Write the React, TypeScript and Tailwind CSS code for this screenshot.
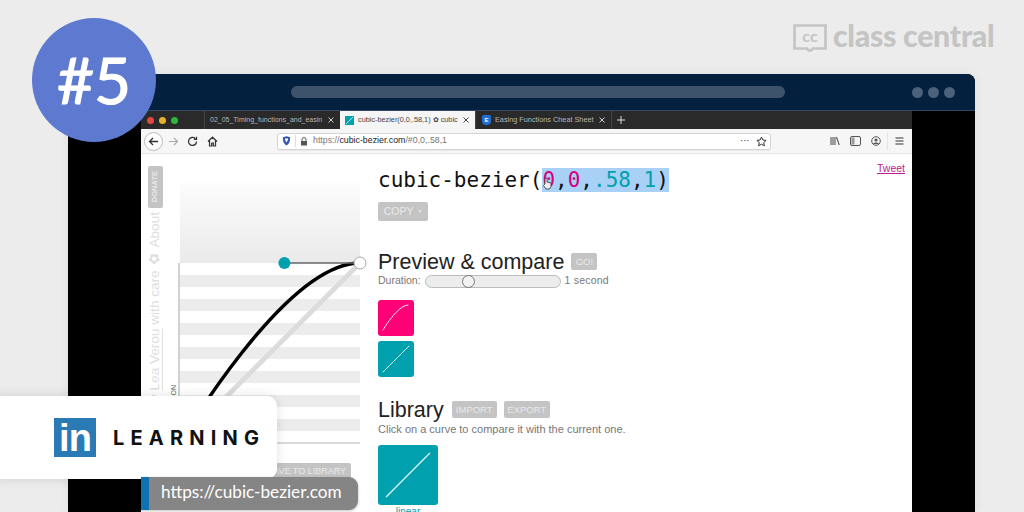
import React from "react";

const sans = "font-['Liberation_Sans',Arial,sans-serif]";

function Btn({ children, className = "" }: { children: React.ReactNode; className?: string }) {
  return (
    <span className={`inline-flex items-center justify-center rounded-[2px] bg-[#c4c4c4] text-[#e9e9e9] ${className}`}>
      {children}
    </span>
  );
}

function Thumb({ bg, size, curve, sw, className = "" }: { bg: string; size: number; curve: string; sw: number; className?: string }) {
  return (
    <div className={`rounded-[3px] ${className}`} style={{ background: bg, width: size, height: size }}>
      <svg viewBox="0 0 36 36" width={size} height={size}>
        <path d={curve} fill="none" stroke="#d9f2f4" strokeWidth={sw} strokeLinecap="round" />
      </svg>
    </div>
  );
}

function Tab({ active, title, icon, w, textClass = "text-[7.3px]" }: { active?: boolean; title: string; icon?: React.ReactNode; w: string; textClass?: string }) {
  return (
    <div className={`${w} flex h-full shrink-0 items-center gap-1 pl-[5px] pr-[5px] ${active ? "bg-[#f5f5f5] text-[#444]" : "border-l border-[#444] text-[#b5b5b5]"}`}>
      {icon}
      <span className={`flex-1 whitespace-nowrap ${textClass}`}>{title}</span>
      <svg width="8" height="8" viewBox="0 0 8 8" className="shrink-0"><path d="M1.5 1.5l5 5M6.5 1.5l-5 5" stroke={active ? "#444" : "#ccc"} strokeWidth="1" /></svg>
    </div>
  );
}

function Chart() {
  return (
    <svg width="200" height="320" viewBox="0 0 200 320" className="block overflow-visible">
      <defs>
        <linearGradient id="top" x1="0" x2="0" y1="0" y2="1">
          <stop offset="0" stopColor="#fcfcfc" />
          <stop offset="1" stopColor="#eaeaea" />
        </linearGradient>
      </defs>
      <rect x="20" y="39" width="180" height="80" fill="url(#top)" />
      {[0, 1, 2, 3, 4, 5, 6].map((i) => (
        <rect key={i} x="20" y={131 + i * 24} width="180" height="12" fill="#ececec" />
      ))}
      <path d="M19 119V299H200" fill="none" stroke="#b5b5b5" strokeWidth="1.2" />
      <path d="M200 119L20 299" stroke="#dcdcdc" strokeWidth="5" />
      <path d="M20 299C20 299 124.4 119 200 119" fill="none" stroke="#000" strokeWidth="3.5" />
      <path d="M124 119H200" stroke="#666" strokeWidth="1.5" />
      <circle cx="124.4" cy="119" r="6" fill="#00a0ae" />
      <circle cx="200" cy="119" r="6" fill="#fff" stroke="#a8a8a8" />
    </svg>
  );
}

export default function App() {
  return (
    <div className={`relative h-[512px] w-[1024px] overflow-hidden bg-[#ececec] ${sans}`}>
      {/* Window */}
      <div className="pl-[68px] pr-[49px] pt-[74px]">
        <div className="h-[438px] overflow-hidden rounded-tr-[8px] bg-black shadow-[0_0_12px_rgba(0,0,0,0.06)]">
          <div className="flex h-[37px] items-center border-b border-[#35495f] bg-[#03213f] pl-[223px] pr-[20px]">
            <div className="h-[12px] w-[494px] rounded-full bg-[#3d536c]" />
            <div className="ml-auto flex gap-[5px]">
              <span className="h-[11px] w-[11px] rounded-full bg-[#4b6079]" />
              <span className="h-[11px] w-[11px] rounded-full bg-[#4b6079]" />
              <span className="h-[11px] w-[11px] rounded-full bg-[#4b6079]" />
            </div>
          </div>

          {/* Browser */}
          <div className="ml-[73px] h-[401px] w-[771px] bg-white">
            <div className="flex h-[18px] items-center bg-[#2a2a2a]">
              <div className="flex w-[63px] shrink-0 items-center gap-[5px] pl-[6px]">
                <span className="h-[7px] w-[7px] rounded-full bg-[#e0493f]" />
                <span className="h-[7px] w-[7px] rounded-full bg-[#e9ae2c]" />
                <span className="h-[7px] w-[7px] rounded-full bg-[#2fb53c]" />
              </div>
              <Tab w="w-[136px]" textClass="text-[7px]" title="02_05_Timing_functions_and_easin" />
              <Tab
                active
                w="w-[135px]"
                title="cubic-bezier(0,0,.58,1) ✿ cubic"
                icon={<span className="flex h-[9px] w-[9px] shrink-0 items-center justify-center bg-[#00a0ae]"><svg width="9" height="9" viewBox="0 0 9 9"><path d="M1 8L8 1" stroke="#d9f2f4" strokeWidth="0.8" /></svg></span>}
              />
              <Tab
                w="w-[136px]"
                title="Easing Functions Cheat Sheet"
                icon={<span className="ml-[1px] flex h-[10px] w-[9px] shrink-0 items-center justify-center rounded-b-[4px] rounded-t-[2px] bg-[#1f6fd0] text-[6px] font-bold text-white">E</span>}
              />
              <span className="h-full w-px bg-[#444]" />
              <svg className="ml-[4px]" width="10" height="10" viewBox="0 0 10 10"><path d="M5 1v8M1 5h8" stroke="#ddd" strokeWidth="1" /></svg>
            </div>

            <div className="flex h-[25px] items-center border-b border-[#e4e4e4] bg-[#f6f6f6] pl-[3px] pr-[8px] text-[#444]">
              <span className="flex h-[19px] w-[19px] items-center justify-center rounded-full border border-[#bbb] bg-white">
                <svg width="11" height="11" viewBox="0 0 11 11"><path d="M10 5.5H1.5M5 2L1.5 5.5 5 9" fill="none" stroke="#333" strokeWidth="1.3" /></svg>
              </span>
              <svg className="ml-[5px]" width="11" height="11" viewBox="0 0 11 11"><path d="M1 5.5h8.5M6 2l3.5 3.5L6 9" fill="none" stroke="#aaa" strokeWidth="1.2" /></svg>
              <svg className="ml-[8px]" width="11" height="11" viewBox="0 0 11 11"><path d="M9.5 5.5a4 4 0 1 1-1.3-3M9.5 0.8v2.6H6.9" fill="none" stroke="#333" strokeWidth="1.3" /></svg>
              <svg className="ml-[9px]" width="11" height="11" viewBox="0 0 11 11"><path d="M1 5.5L5.5 1.2 10 5.5M2.5 4.5V10h2.2V7h1.6v3h2.2V4.5" fill="none" stroke="#333" strokeWidth="1.2" /></svg>
              <div className="ml-[59px] flex h-[17px] w-[494px] items-center rounded-[3px] border border-[#d4d4d4] bg-white pl-[4px] pr-[3px] shadow-[0_1px_1px_rgba(0,0,0,0.06)]">
                <svg width="9" height="10" viewBox="0 0 9 10"><path d="M0.8 1.2L4.5 0.3 8.2 1.2C8.2 5.5 7 8 4.5 9.6 2 8 0.8 5.5 0.8 1.2z" fill="#3557b0" /><path d="M3 2.5h3v1.2L4.5 6.5 3 3.7z" fill="#fff" /></svg>
                <span className="mx-[4px] h-[12px] w-px bg-[#ddd]" />
                <svg width="8" height="9" viewBox="0 0 8 9"><path d="M2 4V2.6a2 2 0 0 1 4 0V4" fill="none" stroke="#555" /><rect x="1" y="4" width="6" height="4.6" rx="0.6" fill="#555" /></svg>
                <span className="ml-[5px] whitespace-nowrap text-[8.8px] text-[#222]">
                  <span className="text-[#777]">https://</span>cubic-bezier.com<span className="text-[#777]">/#0,0,.58,1</span>
                </span>
                <span className="ml-auto text-[8px] font-bold leading-none tracking-[0.5px] text-[#555]">···</span>
                <svg className="ml-[6px]" width="11" height="11" viewBox="0 0 11 11"><path d="M5.5 1l1.4 3 3.2.4-2.4 2.2.7 3.2-2.9-1.6-2.9 1.6.7-3.2L.9 4.4l3.2-.4z" fill="none" stroke="#333" strokeWidth="1" /></svg>
              </div>
              <svg className="ml-auto" width="10" height="10" viewBox="0 0 10 10"><path d="M1 1v8M3 1v8M5 1v8M6.5 1l2.7 8" stroke="#555" strokeWidth="1.1" fill="none" /></svg>
              <svg className="ml-[10px]" width="11" height="10" viewBox="0 0 11 10"><rect x="0.5" y="0.5" width="10" height="9" rx="1.5" fill="none" stroke="#555" /><rect x="1.5" y="1.5" width="3" height="7" fill="#999" /></svg>
              <svg className="ml-[10px]" width="10" height="10" viewBox="0 0 10 10"><circle cx="5" cy="5" r="4.3" fill="none" stroke="#555" /><circle cx="5" cy="4" r="1.6" fill="#555" /><path d="M2 8c1-2 5-2 6 0z" fill="#555" /></svg>
              <span className="ml-[6px] h-[17px] w-px bg-[#e4e4e4]" />
              <svg className="ml-[7px]" width="9" height="8" viewBox="0 0 9 8"><path d="M0.5 1h8M0.5 4h8M0.5 7h8" stroke="#333" strokeWidth="1.2" /></svg>
            </div>

            {/* Page */}
            <div className="relative flex h-[358px] bg-white">
              <div className="relative w-[237px] shrink-0">
                <div className="absolute left-[19px] top-[-10px]"><Chart /></div>
                <div className="absolute left-[7px] top-[12px] flex h-[300px] w-[14px] flex-col items-center">
                  <Btn className="h-[42px] w-[15px] shrink-0 text-[7.5px] font-bold"><span className="rotate-180 [writing-mode:vertical-rl]">DONATE</span></Btn>
                  <span className="mt-[4px] rotate-180 whitespace-nowrap text-[13.6px] leading-none text-[#dedede] [writing-mode:vertical-rl]">
                    by <span className="underline">Lea Verou</span> with care ✿ About
                  </span>
                </div>
                <span className="absolute left-[28px] top-[231px] rotate-180 text-[7px] text-[#666] [writing-mode:vertical-rl]">ON</span>
                <Btn className="absolute left-[120px] top-[309px] h-[17px] w-[90px] justify-end pr-[5px] text-[9px]">SAVE TO LIBRARY</Btn>
              </div>

              <div className="flex-1 pt-[14px]">
                <div className="relative font-['DejaVu_Sans_Mono',monospace] text-[21px] leading-[24px] text-[#111]">
                  cubic-bezier(<span className="bg-[#a9d1f5]"><span className="text-[#d4007f]">0</span>,<span className="text-[#d4007f]">0</span>,<span className="text-[#00a0ae]">.58</span>,<span className="text-[#00a0ae]">1</span>)</span>
                  <svg className="absolute left-[164px] top-[9px]" width="11" height="13" viewBox="0 0 11 13">
                    <path d="M3 7V2a1 1 0 0 1 2 0v3l4 1v3.5L7.5 12H4L1.5 8.5 3 7z" fill="#eee" stroke="#444" strokeWidth="0.9" />
                  </svg>
                </div>
                <Btn className="mt-[10px] h-[19px] w-[50px] text-[10.5px]">COPY <span className="ml-[4px] text-[5px]">▼</span></Btn>

                <div className="mt-[28px] flex items-center">
                  <span className="text-[21.5px] leading-[24px] text-[#222]">Preview &amp; compare</span>
                  <Btn className="ml-[7px] h-[17px] w-[26px] text-[9.5px]">GO!</Btn>
                </div>
                <div className="flex h-[15px] items-center text-[10.5px] text-[#777]">
                  <span>Duration:</span>
                  <div className="relative ml-[4px] h-[13px] w-[136px] rounded-full border border-[#bbb] bg-[#ececec]">
                    <span className="absolute left-[36px] top-[-1px] h-[13px] w-[13px] rounded-full border border-[#777] bg-[#f2f2f2]" />
                  </div>
                  <span className="ml-[4px] tracking-[0.2px]">1 second</span>
                </div>
                <Thumb className="mt-[11px]" bg="#ff0077" size={36} sw={1} curve="M5 30C5 30 19.5 5 30 5" />
                <Thumb className="mt-[5px]" bg="#00a0ae" size={36} sw={1} curve="M5 31L31 5" />

                <div className="mt-[21px] flex items-center">
                  <span className="text-[21.5px] leading-[24px] text-[#222]">Library</span>
                  <Btn className="ml-[8px] h-[17px] w-[45px] text-[9.5px]">IMPORT</Btn>
                  <Btn className="ml-[7px] h-[17px] w-[46px] text-[9.5px]">EXPORT</Btn>
                </div>
                <div className="mt-[1px] text-[11px] leading-[13px] text-[#777]">Click on a curve to compare it with the current one.</div>
                <Thumb className="mt-[9px]" bg="#00a0ae" size={60} sw={0.8} curve="M5 31L31 5" />
                <div className="w-[60px] text-center text-[10px] leading-[14px] text-[#00a0ae]">linear</div>
              </div>
              <a className="absolute right-[7px] top-[7px] text-[10.5px] text-[#c0208f] underline">Tweet</a>
            </div>
          </div>
        </div>
      </div>

      {/* #5 badge */}
      <div className="absolute left-[32px] top-[18px] flex h-[124px] w-[124px] items-center justify-center rounded-full bg-[#5e7ad0] font-['Lato',sans-serif] text-[64px] font-normal leading-none text-white [-webkit-text-stroke:1.2px_white]">
        #5
      </div>

      {/* Class Central logo */}
      <div className="absolute left-[793px] top-[24px] flex items-start gap-[6px] text-[#c4c4c4]">
        <svg width="34" height="28" viewBox="0 0 34 28">
          <path d="M1.5 1.5H32.5V24.5H20L18 26.5H16L14 24.5H1.5Z" fill="none" stroke="#c4c4c4" strokeWidth="2.6" />
          <text x="17" y="17.5" textAnchor="middle" fontSize="16" fontWeight="700" fill="#c4c4c4" fontFamily="Lato, sans-serif">cc</text>
        </svg>
        <span className="mt-[-4px] font-['Lato',sans-serif] text-[30.3px] font-black leading-[30px] tracking-[-0.3px]">class central</span>
      </div>

      {/* LinkedIn Learning card */}
      <div className="absolute left-[-10px] top-[396px] flex h-[83px] w-[287px] items-center rounded-[10px] bg-white pl-[64px] shadow-[0_0_12px_rgba(0,0,0,0.12)]">
        <div className="flex h-[39px] w-[42px] items-center justify-center bg-[#2a7ab5] font-['Liberation_Sans',sans-serif] text-[38px] font-bold leading-none tracking-[-1px] text-white">
          in
        </div>
        <span className="ml-[17px] font-['Inter',sans-serif] text-[20px] font-bold leading-none tracking-[6.2px] text-[#111]">LEARNING</span>
      </div>

      {/* URL pill */}
      <div className="absolute left-[141px] top-[477px] flex h-[33px] w-[217px] items-center overflow-hidden rounded-r-[9px] bg-[#858585] shadow-[0_1px_3px_rgba(0,0,0,0.25)]">
        <span className="h-full w-[8px] bg-[#0f73b0]" />
        <span className="mb-[3px] ml-[12px] font-['Lato',sans-serif] text-[17.2px] text-white">https://cubic-bezier.com</span>
      </div>
    </div>
  );
}
